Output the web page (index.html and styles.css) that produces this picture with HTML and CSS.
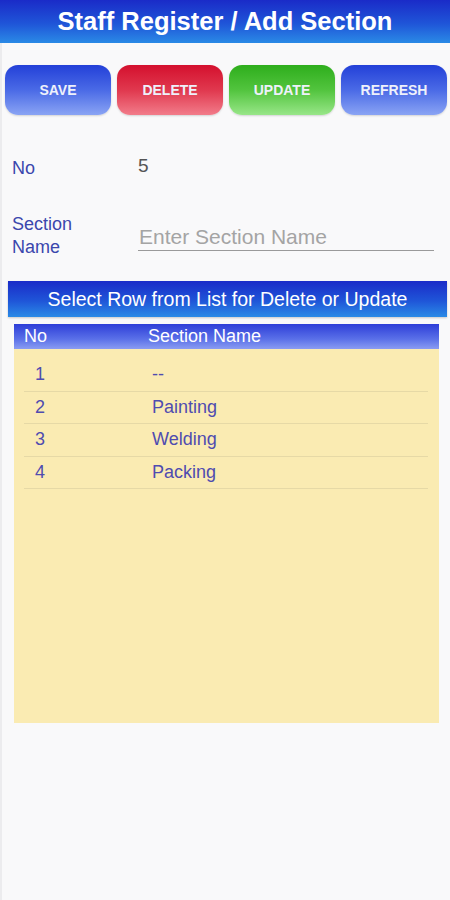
FILE: index.html
```html
<!DOCTYPE html>
<html lang="en">
<head>
    <meta charset="UTF-8">
    <meta name="viewport" content="width=device-width, initial-scale=1.0">
    <title>Staff Register / Add Section</title>
    <link rel="stylesheet" href="styles.css">
</head>
<body>
    <div class="header">
        <h1>Staff Register / Add Section</h1>
    </div>

    <div class="page">
        <div class="actions">
            <a href="#" class="btn btn-blue">SAVE</a>
            <a href="#" class="btn btn-red">DELETE</a>
            <a href="#" class="btn btn-green">UPDATE</a>
            <a href="#" class="btn btn-blue">REFRESH</a>
        </div>

        <div class="form">
            <div class="form-row row-no">
                <label>No</label>
                <span class="value">5</span>
            </div>
            <div class="form-row row-name">
                <label>Section<br>Name</label>
                <input type="text" placeholder="Enter Section Name">
            </div>
        </div>

        <div class="banner">Select Row from List for Delete or Update</div>

        <div class="list">
            <div class="list-head">
                <span class="col-no">No</span>
                <span class="col-name">Section Name</span>
            </div>
            <div class="list-body">
                <div class="list-row"><span class="col-no">1</span><span class="col-name">--</span></div>
                <div class="list-row"><span class="col-no">2</span><span class="col-name">Painting</span></div>
                <div class="list-row"><span class="col-no">3</span><span class="col-name">Welding</span></div>
                <div class="list-row"><span class="col-no">4</span><span class="col-name">Packing</span></div>
            </div>
        </div>
    </div>
</body>
</html>
```

FILE: styles.css
```css
* {
    margin: 0;
    padding: 0;
    box-sizing: border-box;
}

body {
    font-family: "Liberation Sans", Arial, sans-serif;
    background: #f9f9fa;
    min-height: 100vh;
}

.header {
    height: 43px;
    background: linear-gradient(180deg, #1a2bc8 0%, #1f55d8 55%, #2a8ae6 100%);
    display: flex;
    align-items: center;
    justify-content: center;
}

.header h1 {
    color: #fff;
    font-size: 25.5px;
    font-weight: bold;
}

.page {
    border-left: 2px solid #ececee;
    min-height: 857px;
    padding-top: 22px;
}

.actions {
    display: flex;
    gap: 6px;
    padding: 0 3px 0 3px;
}

.btn {
    flex: 1;
    height: 50px;
    border-radius: 13px;
    display: flex;
    align-items: center;
    justify-content: center;
    color: #eef1fb;
    font-size: 14px;
    font-weight: bold;
    text-decoration: none;
    box-shadow: 0 1px 2px rgba(0,0,0,0.15);
}

.btn-blue {
    background: linear-gradient(180deg, #2340d8 0%, #4a6ae6 50%, #8aa4f4 100%);
}

.btn-red {
    background: linear-gradient(180deg, #d4102e 0%, #e0384e 50%, #f27c8a 100%);
}

.btn-green {
    background: linear-gradient(180deg, #2eae1c 0%, #52c43e 50%, #98e688 100%);
}

.form {
    padding: 0 16px 0 10px;
}

.form-row {
    display: flex;
    align-items: center;
}

.form-row label {
    width: 126px;
    color: #3b47ad;
    font-size: 18px;
    line-height: 23px;
}

.row-no {
    margin-top: 39px;
}

.row-no label {
    position: relative;
    top: 3px;
}

.row-no .value {
    color: #555;
    font-size: 19px;
}

.row-name {
    margin-top: 36px;
}

.row-name input {
    flex: 1;
    border: none;
    border-bottom: 1.5px solid #9a9a9a;
    background: transparent;
    font-family: inherit;
    font-size: 21px;
    padding: 3px 0 1px 1px;
    outline: none;
}

.row-name input::placeholder {
    color: #a4a4a4;
}

.banner {
    margin: 22px 3px 0 6px;
    height: 36px;
    background: linear-gradient(180deg, #1a2bc8 0%, #1f55d8 55%, #2a8ae6 100%);
    color: #fff;
    font-size: 19.5px;
    display: flex;
    align-items: center;
    justify-content: center;
    box-shadow: 0 1px 2px rgba(0,0,0,0.2);
}

.list {
    margin: 7px 11px 0 12px;
}

.list-head {
    height: 25px;
    background: linear-gradient(180deg, #2d3ed8 0%, #5a70e8 60%, #8a9cf2 100%);
    color: #fff;
    font-size: 18px;
    display: flex;
    align-items: center;
}

.list-head .col-no {
    width: 134px;
    padding-left: 10px;
}

.list-body {
    background: #faebb2;
    height: 374px;
    padding: 10px 11px 0 10px;
}

.list-row {
    height: 32.5px;
    display: flex;
    align-items: center;
    border-bottom: 1px solid #e6d9a6;
    color: #4f4cb0;
    font-size: 18px;
}

.list-row .col-no {
    width: 128px;
    padding-left: 11px;
}
```
